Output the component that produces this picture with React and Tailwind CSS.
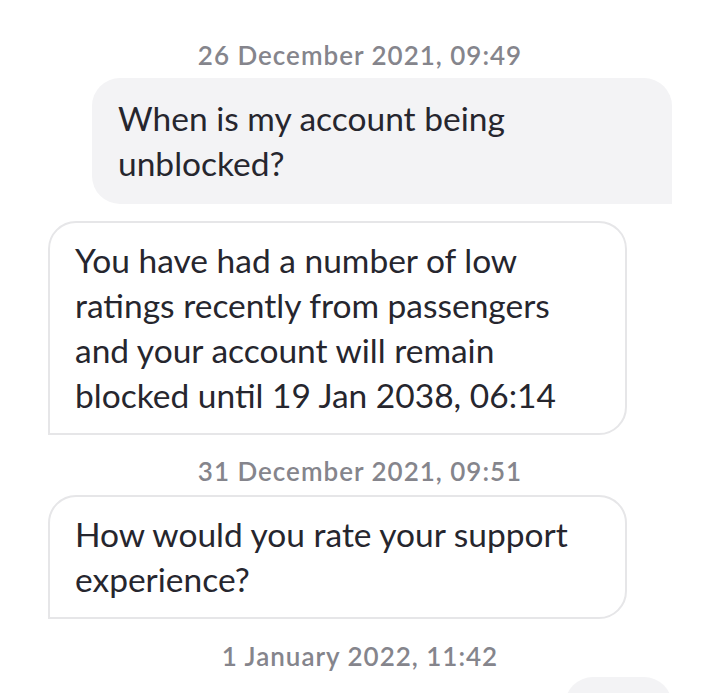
import React from "react";

const thread = [
  { type: "time", text: "26 December 2021, 09:49", gap: "mt-[41px]" },
  { type: "out", text: "When is my account being unblocked?", gap: "mt-[9px]" },
  {
    type: "in",
    text: "You have had a number of low ratings recently from passengers and your account will remain blocked until 19 Jan 2038, 06:14",
    gap: "mt-[17px]",
  },
  { type: "time", text: "31 December 2021, 09:51", gap: "mt-[22px]" },
  { type: "in", text: "How would you rate your support experience?", gap: "mt-[10px]" },
  { type: "time", text: "1 January 2022, 11:42", gap: "mt-[23px]" },
  { type: "out", text: "", gap: "mt-[7px]", short: true },
];

function Stamp({ text, gap }) {
  return (
    <div className={`${gap} h-[28px] text-center text-[26px] leading-[28px] font-semibold tracking-[1px] text-[#85858c]`}>
      {text}
    </div>
  );
}

function Bubble({ type, text, gap, short }) {
  if (type === "out") {
    return (
      <div className={`${gap} flex justify-end pr-[48px]`}>
        <div
          className={`${
            short ? "w-[107px] h-[80px]" : "w-[580px]"
          } shrink-0 rounded-[28px] rounded-br-none bg-[#f3f3f5] px-[26px] py-[18px] text-[33.5px] leading-[45px] text-[#26262e]`}
        >
          {text}
        </div>
      </div>
    );
  }
  return (
    <div className={`${gap} flex justify-start pl-[48px]`}>
      <div className="w-[579px] rounded-[28px] rounded-bl-none border-2 border-[#e6e6e8] bg-white px-[25px] py-[15px] text-[33.5px] leading-[45px] text-[#26262e]">
        {text}
      </div>
    </div>
  );
}

export default function App() {
  return (
    <div
      className="h-[693px] w-[720px] overflow-hidden bg-white flex flex-col"
      style={{ fontFamily: "Lato, 'Open Sans', sans-serif" }}
    >
      {thread.map((item, i) =>
        item.type === "time" ? (
          <Stamp key={i} {...item} />
        ) : (
          <Bubble key={i} {...item} />
        )
      )}
    </div>
  );
}
